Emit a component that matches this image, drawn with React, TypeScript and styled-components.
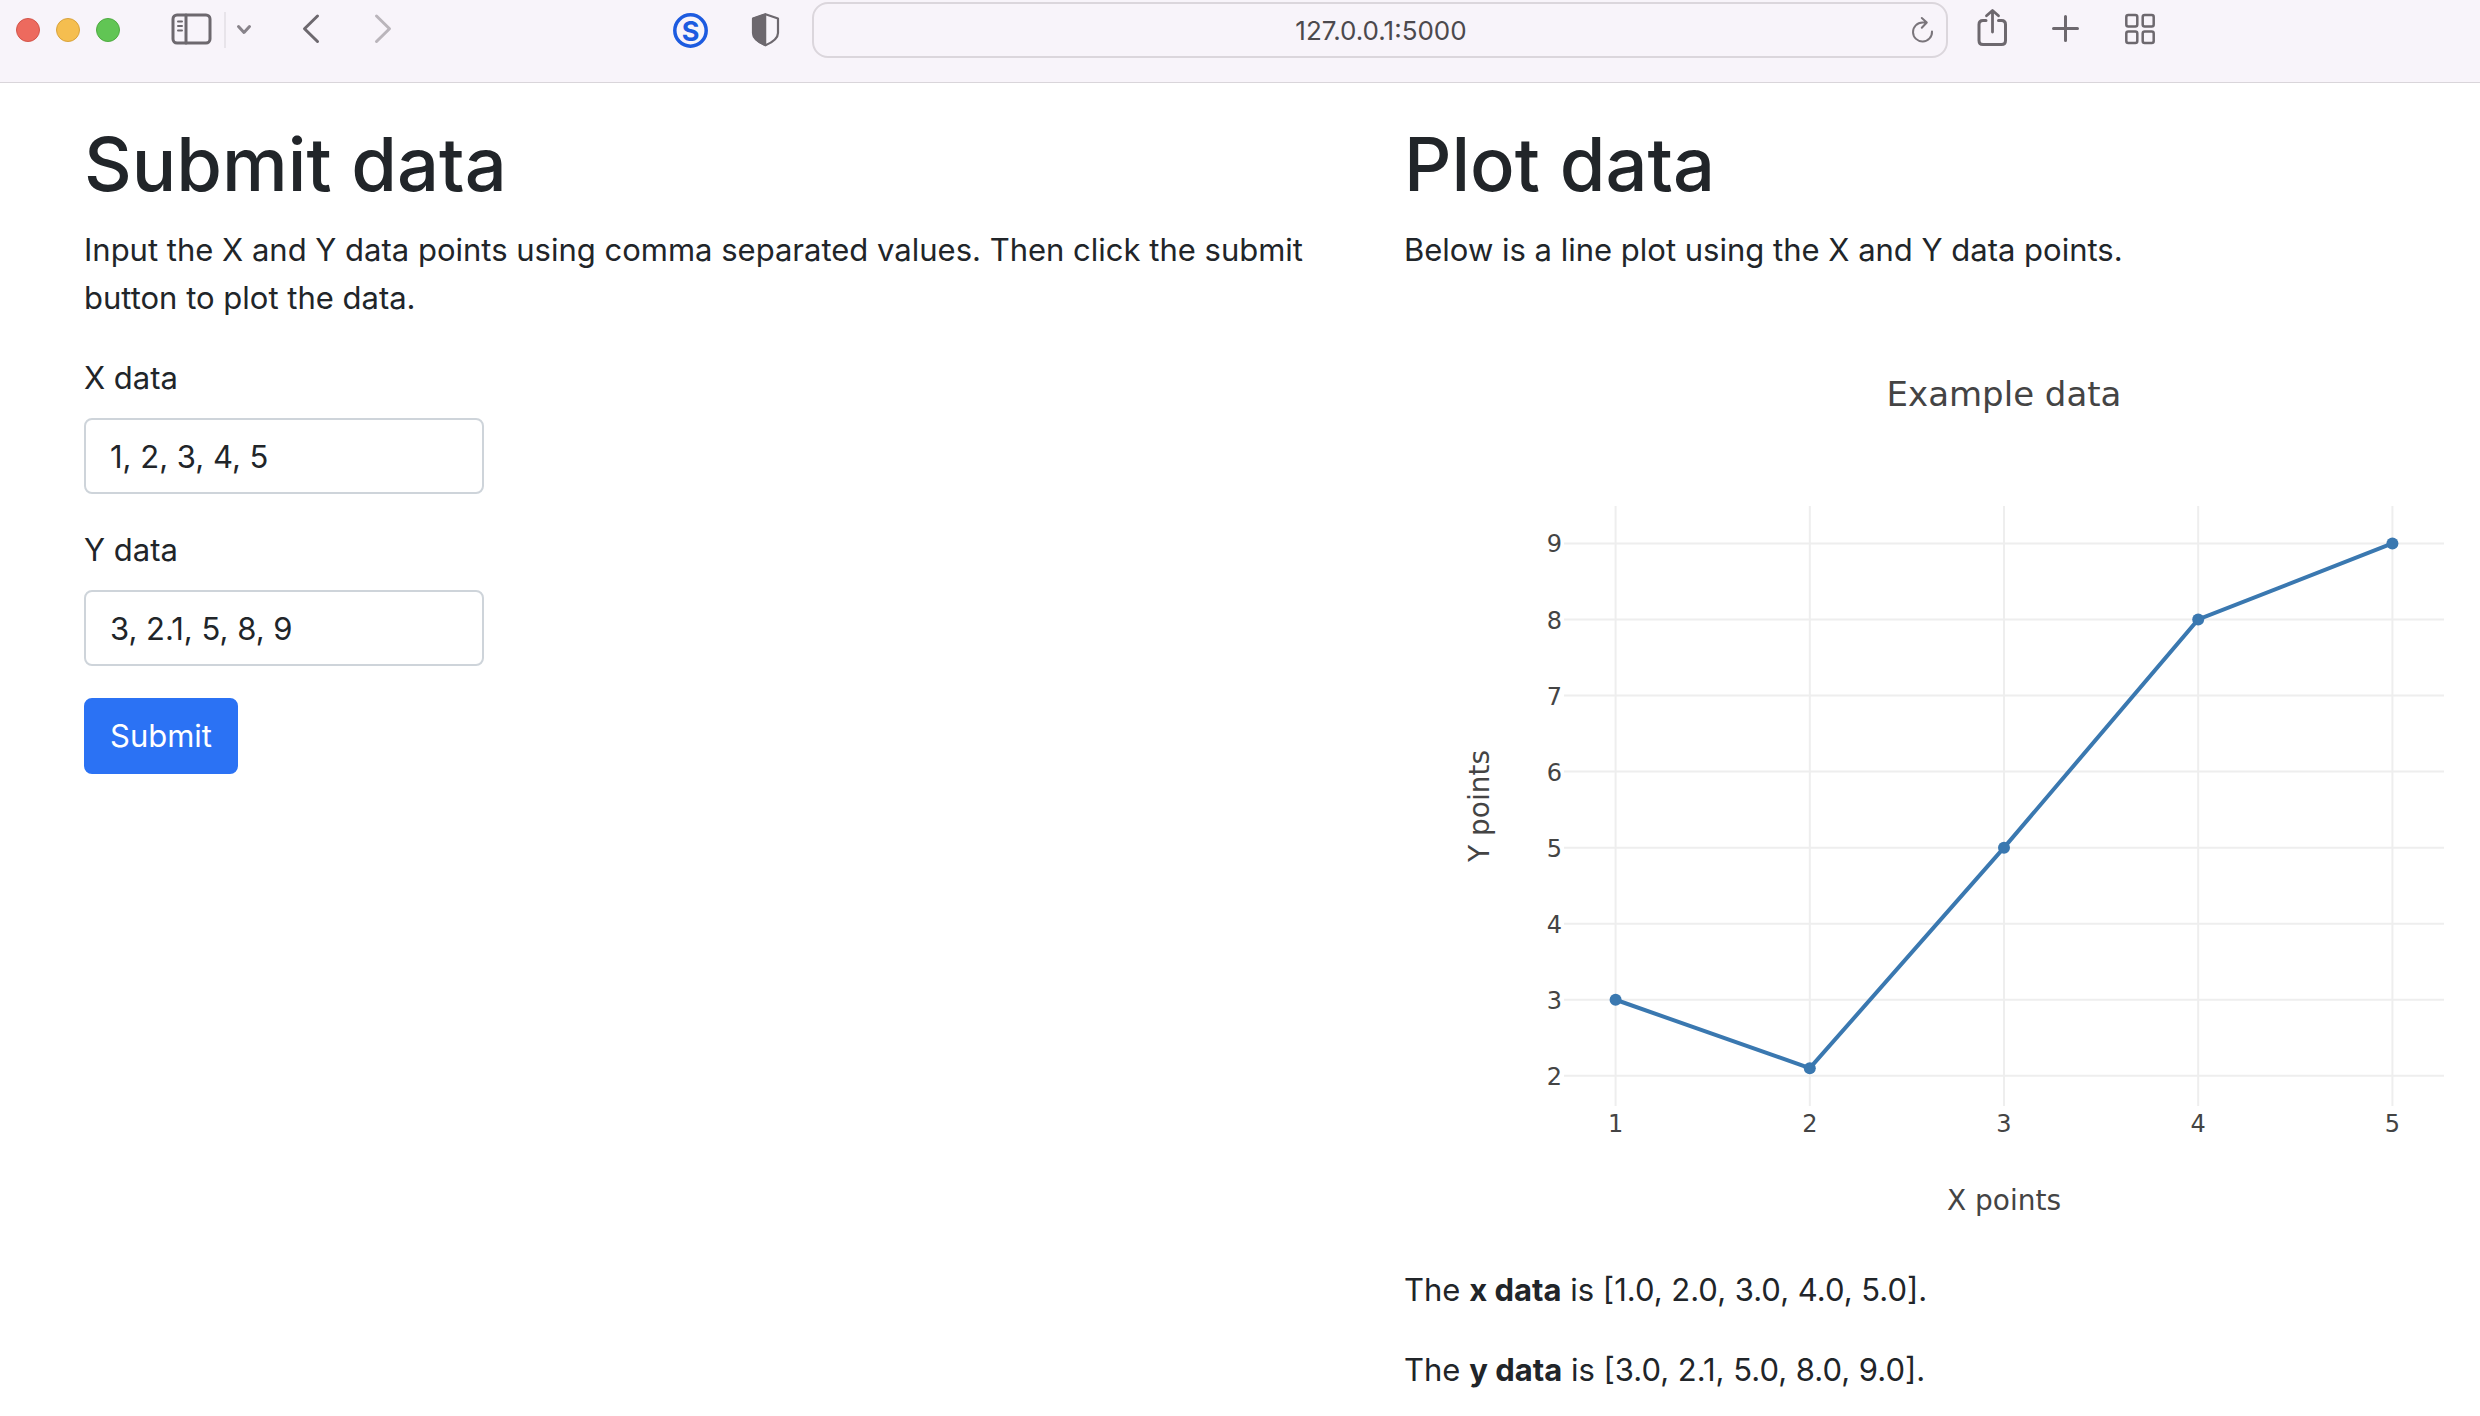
import React, { useState } from "react";
import styled, { createGlobalStyle } from "styled-components";

const UI_FONT = `Inter, "Liberation Sans", sans-serif`;
const CHART_FONT = `"DejaVu Sans", Verdana, sans-serif`;

const GlobalStyle = createGlobalStyle`
  *, *::before, *::after { box-sizing: border-box; }
  body {
    margin: 0;
    background: #fff;
    color: #212529;
    font-family: ${UI_FONT};
    font-size: 31px;
    line-height: 48px;
  }
`;

/* ---------- browser toolbar ---------- */

const Toolbar = styled.header`
  display: grid;
  grid-template-columns: 774px minmax(0, 1fr) auto;
  column-gap: 22px;
  align-items: start;
  height: 82px;
  padding: 2px 318px 0 16px;
  background: #f8f4fa;
  box-shadow: 0 1px 0 #d9d5da;
`;

const ToolGroup = styled.div<{ $gap?: number }>`
  display: flex;
  align-items: center;
  gap: ${(p) => p.$gap ?? 0}px;
  height: 56px;
`;

const ToolSide = styled(ToolGroup)`
  justify-content: space-between;
  padding-right: 2px;
`;

const Light = styled.button<{ $fill: string; $edge: string }>`
  width: 24px;
  height: 24px;
  padding: 0;
  border: 1px solid ${(p) => p.$edge};
  border-radius: 50%;
  background: ${(p) => p.$fill};
`;

const IconButton = styled.button<{ $narrow?: boolean; $dim?: boolean }>`
  display: block;
  width: ${(p) => (p.$narrow ? 24 : 44)}px;
  height: 44px;
  padding: 0;
  border: 0;
  background: none;
  color: ${(p) => (p.$dim ? "#bab5bb" : "#6d686e")};

  svg {
    display: block;
    width: 100%;
    height: 100%;
    fill: none;
    stroke: currentColor;
    stroke-width: 3;
    stroke-linecap: round;
    stroke-linejoin: round;
  }
`;

const Divider = styled.span`
  width: 2px;
  height: 36px;
  margin: 0 6px 0 10px;
  background: #e8e4ea;
`;

const AddressBar = styled.div`
  display: flex;
  align-items: center;
  height: 56px;
  padding: 0 2px 0 48px;
  border: 2px solid #dbd6dc;
  border-radius: 16px;
`;

const AddressInput = styled.input`
  flex: 1;
  min-width: 0;
  padding: 2px 0 0;
  border: 0;
  background: none;
  color: #4c494d;
  font: 26px/32px ${UI_FONT};
  text-align: center;
  outline: none;
`;

/* ---------- page ---------- */

const Page = styled.main`
  display: grid;
  grid-template-columns: minmax(0, 1272fr) minmax(0, 1076fr);
  column-gap: 48px;
  padding: 32px 0 0 84px;
`;

const Title = styled.h1`
  margin: 0 0 12px;
  font-size: 74px;
  font-weight: 500;
  line-height: 100px;
`;

const Paragraph = styled.p`
  margin: 0 0 32px;

  &:last-child {
    margin-bottom: 0;
  }
`;

const Field = styled.div`
  display: flex;
  flex-direction: column;
  align-items: flex-start;
  gap: 16px;
  margin-bottom: 32px;
`;

const TextInput = styled.input`
  width: 400px;
  padding: 12px 24px;
  height: 76px;
  border: 2px solid #ced4da;
  border-radius: 8px;
  background: #fff;
  color: inherit;
  font: inherit;
`;

const SubmitButton = styled.button`
  padding: 12px 24px;
  border: 2px solid #2b72f4;
  border-radius: 8px;
  background: #2b72f4;
  color: #fff;
  font: inherit;
`;

const Chart = styled.svg`
  display: block;
  width: 100%;
  height: auto;
  fill: #444;
  font-family: ${CHART_FONT};

  .title { font-size: 34px; }
  .axis { font-size: 28px; }
  .tick { font-size: 24px; }
  .grid { stroke: #eee; stroke-width: 2; }
  .line { fill: none; stroke: #3a78b0; stroke-width: 4; }
  .dot { fill: #3a78b0; }
`;

const PLOT = { left: 160, right: 1040, top: 200, bottom: 800 };

const xAt = (x: number) => 211.6 + (x - 1) * 194.2;
const yAt = (y: number) => 769.8 - (y - 2) * 76.05;

function LinePlot({ xs, ys }: { xs: number[]; ys: number[] }) {
  const xTicks = [1, 2, 3, 4, 5];
  const yTicks = [2, 3, 4, 5, 6, 7, 8, 9];
  return (
    <Chart viewBox="0 0 1076 960" role="img" aria-label="Example data">
      <text className="title" x={600} y={100} textAnchor="middle">Example data</text>
      {xTicks.map((t) => (
        <g key={t}>
          <line className="grid" x1={xAt(t)} x2={xAt(t)} y1={PLOT.top} y2={PLOT.bottom} />
          <text className="tick" x={xAt(t)} y={826} textAnchor="middle">{t}</text>
        </g>
      ))}
      {yTicks.map((t) => (
        <g key={t}>
          <line className="grid" x1={PLOT.left} x2={PLOT.right} y1={yAt(t)} y2={yAt(t)} />
          <text className="tick" x={158} y={yAt(t) + 9} textAnchor="end">{t}</text>
        </g>
      ))}
      <polyline className="line" points={xs.map((x, i) => `${xAt(x)},${yAt(ys[i])}`).join(" ")} />
      {xs.map((x, i) => (
        <circle key={x} className="dot" cx={xAt(x)} cy={yAt(ys[i])} r={6} />
      ))}
      <text className="axis" x={600} y={904} textAnchor="middle">X points</text>
      <text className="axis" transform="translate(85 500) rotate(-90)" textAnchor="middle">Y points</text>
    </Chart>
  );
}

const parse = (s: string) => s.split(",").map(Number);
const show = (v: number[]) => `[${v.map((n) => n.toFixed(1)).join(", ")}]`;

function BrowserBar() {
  return (
    <Toolbar>
      <ToolSide>
        <ToolGroup $gap={50}>
          <ToolGroup $gap={16}>
            <Light $fill="#ed6a5e" $edge="#d3554a" aria-label="Close" />
            <Light $fill="#f5be4f" $edge="#d9a33c" aria-label="Minimize" />
            <Light $fill="#61c554" $edge="#4fab41" aria-label="Zoom" />
          </ToolGroup>
          <ToolGroup $gap={43}>
            <ToolGroup>
              <IconButton aria-label="Sidebar">
                <svg viewBox="0 0 44 44">
                  <rect x="3" y="7" width="37" height="28" rx="4" />
                  <path d="M16 7V35" />
                  <path d="M8 13.5H12M8 18H12M8 22.5H12" strokeWidth="2" />
                </svg>
              </IconButton>
              <Divider />
              <IconButton $narrow aria-label="Tab groups">
                <svg viewBox="0 0 24 44">
                  <path d="M6.5 18.5L12 24.5L17.5 18.5" stroke="#88838a" />
                </svg>
              </IconButton>
            </ToolGroup>
            <ToolGroup $gap={48}>
              <IconButton $narrow aria-label="Back">
                <svg viewBox="0 0 24 44"><path d="M18.5 8L5.5 20.7L18.5 33.5" /></svg>
              </IconButton>
              <IconButton $narrow $dim aria-label="Forward">
                <svg viewBox="0 0 24 44"><path d="M5.5 8L18.5 20.7L5.5 33.5" /></svg>
              </IconButton>
            </ToolGroup>
          </ToolGroup>
        </ToolGroup>
        <ToolGroup $gap={32}>
          <IconButton aria-label="Extension">
            <svg viewBox="0 0 44 44">
              <circle cx="22.5" cy="22.5" r="15.7" stroke="#1d5be0" strokeWidth="3.5" />
              <text x="22.5" y="32.5" textAnchor="middle" fill="#1d5be0" stroke="none" fontFamily={UI_FONT} fontSize="27" fontWeight="700">S</text>
            </svg>
          </IconButton>
          <IconButton aria-label="Privacy report">
            <svg viewBox="0 0 44 44">
              <path d="M21.5 6.2L34 10.5V25C34 31 28 34.5 21.5 37.3C15 34.5 9 31 9 25V10.5Z" strokeWidth="2.2" />
              <path d="M21.5 6.2V37.3C15 34.5 9 31 9 25V10.5Z" fill="currentColor" strokeWidth="1.5" />
            </svg>
          </IconButton>
        </ToolGroup>
      </ToolSide>
      <AddressBar>
        <AddressInput aria-label="Address" defaultValue="127.0.0.1:5000" />
        <IconButton aria-label="Reload">
          <svg viewBox="0 0 44 44">
            <path d="M32 23.5A9.5 9.5 0 1 1 22.5 14.5H26.5M21.8 10L26.8 14.5L21.8 19.8" stroke="#7a757b" strokeWidth="2" />
          </svg>
        </IconButton>
      </AddressBar>
      <ToolGroup $gap={30}>
        <IconButton aria-label="Share">
          <svg viewBox="0 0 44 44">
            <path d="M16 12.5H13Q9 12.5 9 16.5V32.5Q9 36.5 13 36.5H31.5Q35.5 36.5 35.5 32.5V16.5Q35.5 12.5 31.5 12.5H28.5" />
            <path d="M22.5 24V3M16.5 7.8L22.5 2.5L28.5 7.8" strokeWidth="2.8" />
          </svg>
        </IconButton>
        <IconButton aria-label="New tab">
          <svg viewBox="0 0 44 44"><path d="M9.5 20.5H33.5M21.5 8.5V32.5" /></svg>
        </IconButton>
        <IconButton aria-label="Tab overview">
          <svg viewBox="0 0 44 44">
            <rect x="8.3" y="7" width="11" height="11.5" rx="2" strokeWidth="2.5" />
            <rect x="24.7" y="7" width="11" height="11.5" rx="2" strokeWidth="2.5" />
            <rect x="8.3" y="23.5" width="11" height="11.5" rx="2" strokeWidth="2.5" />
            <rect x="24.7" y="23.5" width="11" height="11.5" rx="2" strokeWidth="2.5" />
          </svg>
        </IconButton>
      </ToolGroup>
    </Toolbar>
  );
}

export default function App() {
  const [xText, setXText] = useState("1, 2, 3, 4, 5");
  const [yText, setYText] = useState("3, 2.1, 5, 8, 9");
  const [data, setData] = useState({ xs: parse(xText), ys: parse(yText) });

  const submit = (e: React.FormEvent) => {
    e.preventDefault();
    setData({ xs: parse(xText), ys: parse(yText) });
  };

  return (
    <>
      <GlobalStyle />
      <BrowserBar />
      <Page>
        <section>
          <Title>Submit data</Title>
          <Paragraph>
            Input the X and Y data points using comma separated values. Then click the submit button to plot the data.
          </Paragraph>
          <form onSubmit={submit}>
            <Field>
              <label htmlFor="x-data">X data</label>
              <TextInput id="x-data" value={xText} onChange={(e) => setXText(e.target.value)} />
            </Field>
            <Field>
              <label htmlFor="y-data">Y data</label>
              <TextInput id="y-data" value={yText} onChange={(e) => setYText(e.target.value)} />
            </Field>
            <SubmitButton type="submit">Submit</SubmitButton>
          </form>
        </section>
        <section>
          <Title>Plot data</Title>
          <Paragraph>Below is a line plot using the X and Y data points.</Paragraph>
          <LinePlot xs={data.xs} ys={data.ys} />
          <Paragraph>The <strong>x data</strong> is {show(data.xs)}.</Paragraph>
          <Paragraph>The <strong>y data</strong> is {show(data.ys)}.</Paragraph>
        </section>
      </Page>
    </>
  );
}
